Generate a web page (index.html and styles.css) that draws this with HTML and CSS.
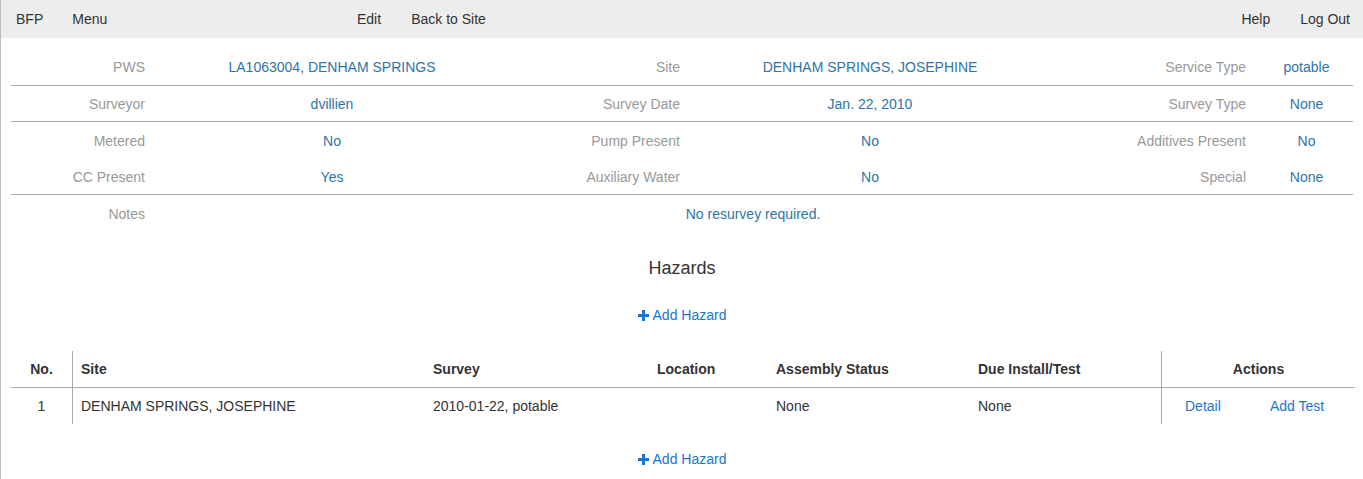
FILE: index.html
```html
<!DOCTYPE html>
<html>
<head>
<meta charset="utf-8">
<link rel="stylesheet" href="styles.css">
</head>
<body>
<div class="page">
  <nav class="nav">
    <div class="nav-left">
      <a class="brand">BFP</a>
      <a class="nav-item">Menu</a>
    </div>
    <div class="nav-mid">
      <a class="nav-item">Edit</a>
      <a class="nav-item">Back to Site</a>
    </div>
    <div class="nav-right">
      <a class="nav-item">Help</a>
      <a class="nav-item">Log Out</a>
    </div>
  </nav>

  <div class="info">
    <div class="row line r1">
      <div class="lbl">PWS</div><div class="val">LA1063004, DENHAM SPRINGS</div>
      <div class="lbl">Site</div><div class="val">DENHAM SPRINGS, JOSEPHINE</div>
      <div class="lbl">Service Type</div><div class="val">potable</div>
    </div>
    <div class="row line">
      <div class="lbl">Surveyor</div><div class="val">dvillien</div>
      <div class="lbl">Survey Date</div><div class="val">Jan. 22, 2010</div>
      <div class="lbl">Survey Type</div><div class="val">None</div>
    </div>
    <div class="row r3">
      <div class="lbl">Metered</div><div class="val">No</div>
      <div class="lbl">Pump Present</div><div class="val">No</div>
      <div class="lbl">Additives Present</div><div class="val">No</div>
    </div>
    <div class="row line">
      <div class="lbl">CC Present</div><div class="val">Yes</div>
      <div class="lbl">Auxiliary Water</div><div class="val">No</div>
      <div class="lbl">Special</div><div class="val">None</div>
    </div>
    <div class="row r3">
      <div class="lbl">Notes</div><div class="val notes">No resurvey required.</div>
    </div>
  </div>

  <h3 class="title">Hazards</h3>
  <div class="add"><a class="add-link"><svg class="plus" width="11" height="11" viewBox="0 0 11 11"><path d="M4 0h3v4h4v3H7v4H4V7H0V4h4z" fill="currentColor"/></svg>Add Hazard</a></div>

  <table class="haz">
    <thead>
      <tr>
        <th class="c-no sep">No.</th>
        <th class="c-site">Site</th>
        <th class="c-survey">Survey</th>
        <th class="c-loc">Location</th>
        <th class="c-asm">Assembly Status</th>
        <th class="c-due sep">Due Install/Test</th>
        <th class="c-act" colspan="2">Actions</th>
      </tr>
    </thead>
    <tbody>
      <tr>
        <td class="c-no sep">1</td>
        <td>DENHAM SPRINGS, JOSEPHINE</td>
        <td>2010-01-22, potable</td>
        <td></td>
        <td>None</td>
        <td class="sep">None</td>
        <td class="act act1"><a>Detail</a></td>
        <td class="act act2"><a>Add Test</a></td>
      </tr>
    </tbody>
  </table>

  <div class="add add2"><a class="add-link"><svg class="plus" width="11" height="11" viewBox="0 0 11 11"><path d="M4 0h3v4h4v3H7v4H4V7H0V4h4z" fill="currentColor"/></svg>Add Hazard</a></div>
</div>
</body>
</html>
```

FILE: styles.css
```css
html, body {
  margin: 0;
  padding: 0;
  background: #fff;
}
body {
  font-family: "Liberation Sans", Arial, sans-serif;
  font-size: 14px;
  color: #333;
}
.page {
  border-left: 1px solid #bbb;
  min-height: 479px;
  box-sizing: border-box;
}
.nav {
  background: #ededed;
  height: 38px;
  display: flex;
  align-items: center;
  padding: 0 0 0 15px;
}
.nav a {
  color: #333;
  text-decoration: none;
}
.nav-left {
  display: flex;
  gap: 29px;
  width: 341px;
}
.nav-mid {
  display: flex;
  gap: 30px;
  flex: 1;
}
.nav-right {
  display: flex;
  gap: 30px;
  padding-right: 13px;
}
.info {
  margin: 10px 10px 0 10px;
}
.row {
  display: grid;
  grid-template-columns: 149px 344px 191px 350px 216px 91px;
  height: 36px;
  align-items: center;
  box-sizing: border-box;
}
.row.r1 {
  height: 38px;
}
.row.r3 {
  height: 37px;
}
.row.line {
  border-bottom: 1px solid #aaa;
}
.lbl {
  text-align: right;
  padding-right: 15px;
  color: #999;
}
.val {
  text-align: center;
  color: #2f74a8;
}
.notes {
  grid-column: 2 / 7;
  padding-right: 6px;
}
.title {
  font-size: 18px;
  font-weight: normal;
  text-align: center;
  margin: 25px 0 0 0;
  line-height: 22px;
  color: #333;
}
.add {
  text-align: center;
  margin-top: 27px;
  line-height: 18px;
}
.add-link {
  color: #1976d2;
  text-decoration: none;
}
.plus {
  margin-right: 4px;
  vertical-align: -1px;
}
.haz {
  margin: 27px 10px 0 10px;
  width: 1344px;
  border-collapse: collapse;
}
.haz th, .haz td {
  text-align: left;
  padding: 8px 8px;
  line-height: 20px;
  height: 20px;
}
.haz th {
  font-weight: bold;
  border-bottom: 1px solid #aaa;
}
.haz .sep {
  border-right: 1px solid #aaa;
}
.haz .c-no {
  text-align: center;
  width: 45px;
}
.c-site { width: 336px; }
.c-survey { width: 208px; }
.c-loc { width: 103px; }
.c-asm { width: 186px; }
.c-due { width: 175px; }
.haz .c-act {
  text-align: center;
}
.haz td.act1 {
  padding-left: 23px;
  width: 65px;
}
.haz td.act2 {
  padding-left: 12px;
}
.act a {
  color: #1976d2;
}
.add2 {
  margin-top: 26px;
}
```
